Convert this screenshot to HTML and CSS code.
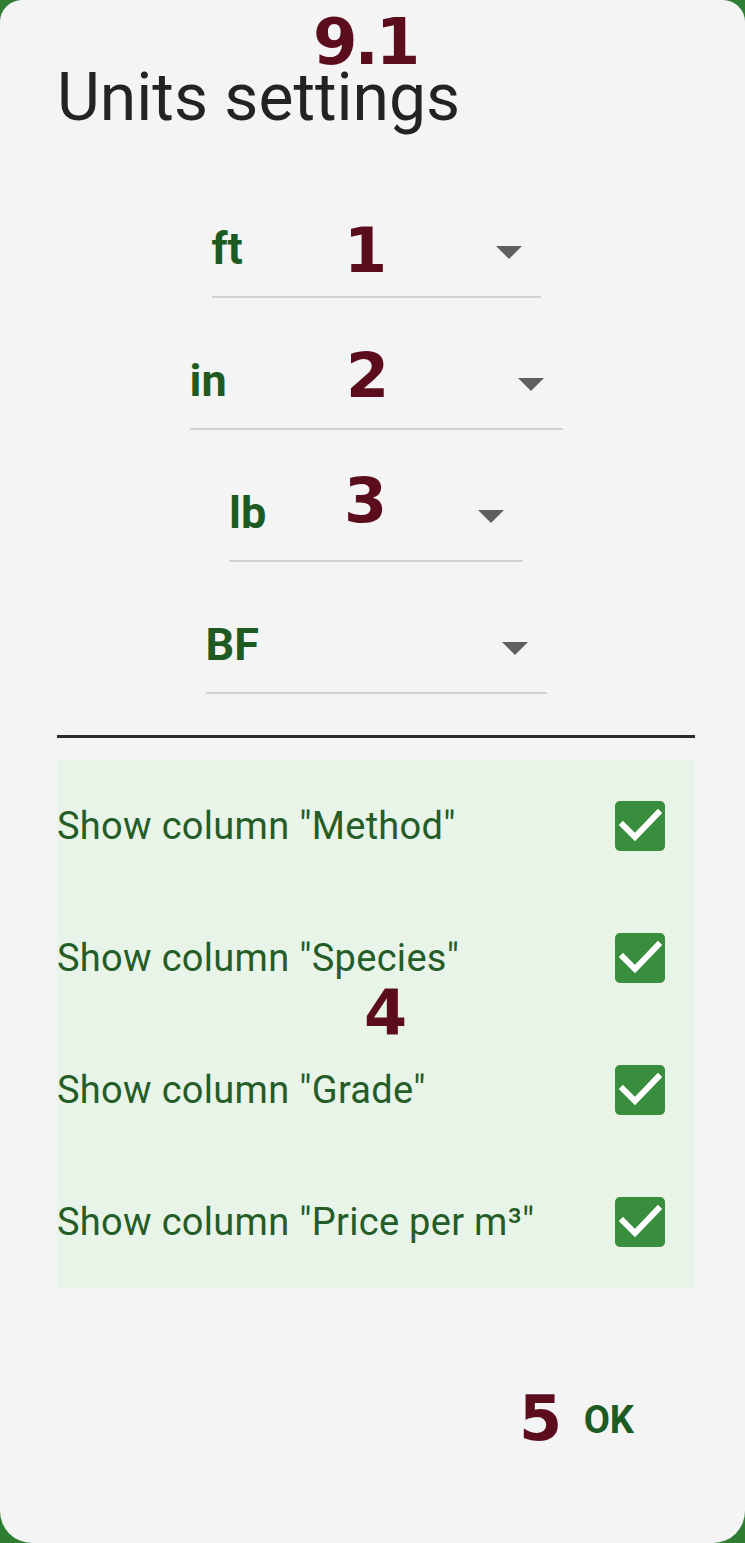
FILE: index.html
```html
<!DOCTYPE html>
<html lang="en">
<head>
<meta charset="utf-8">
<title>Units settings</title>
<link rel="stylesheet" href="styles.css">
</head>
<body>
<div class="card">
  <span class="anno anno-91">9.1</span>
  <h1 class="title">Units settings</h1>

  <div class="selects">
    <div class="select w-ft"><span class="label">ft</span><span class="arrow"></span></div>
    <div class="select w-in"><span class="label">in</span><span class="arrow"></span></div>
    <div class="select w-lb"><span class="label">lb</span><span class="arrow"></span></div>
    <div class="select w-bf"><span class="label">BF</span><span class="arrow"></span></div>
  </div>
  <span class="anno anno-1">1</span>
  <span class="anno anno-2">2</span>
  <span class="anno anno-3">3</span>

  <div class="divider"></div>

  <div class="panel">
    <div class="row"><span class="row-text">Show column "Method"</span><span class="cb"><svg viewBox="0 0 50 50" width="50" height="50"><path d="M8 24 L20 36 L43 12" fill="none" stroke="#fff" stroke-width="6" stroke-linecap="square"/></svg></span></div>
    <div class="row"><span class="row-text">Show column "Species"</span><span class="cb"><svg viewBox="0 0 50 50" width="50" height="50"><path d="M8 24 L20 36 L43 12" fill="none" stroke="#fff" stroke-width="6" stroke-linecap="square"/></svg></span></div>
    <div class="row"><span class="row-text">Show column "Grade"</span><span class="cb"><svg viewBox="0 0 50 50" width="50" height="50"><path d="M8 24 L20 36 L43 12" fill="none" stroke="#fff" stroke-width="6" stroke-linecap="square"/></svg></span></div>
    <div class="row"><span class="row-text">Show column "Price per m³"</span><span class="cb"><svg viewBox="0 0 50 50" width="50" height="50"><path d="M8 24 L20 36 L43 12" fill="none" stroke="#fff" stroke-width="6" stroke-linecap="square"/></svg></span></div>
  </div>
  <span class="anno anno-4">4</span>

  <div class="footer">
    <span class="ok">OK</span>
  </div>
  <span class="anno anno-5">5</span>
</div>
</body>
</html>
```
FILE: styles.css
```css
html, body {
  margin: 0;
  padding: 0;
  background: #2e7d32;
}

.card {
  position: relative;
  box-sizing: border-box;
  width: 745px;
  height: 1543px;
  background: #f4f4f4;
  border-radius: 22px 22px 32px 32px;
  padding: 0 50px 0 57px;
  display: flex;
  flex-direction: column;
  font-family: Roboto, "Liberation Sans", sans-serif;
}

.title {
  margin: 70px 0 0 0;
  font-family: Roboto, "Liberation Sans", sans-serif;
  font-weight: 400;
  font-size: 66px;
  line-height: 56px;
  color: #232323;
  padding-left: 0;
}

.selects {
  margin-top: 98px;
  display: flex;
  flex-direction: column;
  gap: 58px;
  align-items: center;
}

.select {
  box-sizing: border-box;
  height: 74px;
  padding: 0 19px 22px 0;
  border-bottom: 2px solid #d2d2d2;
  display: flex;
  align-items: center;
  justify-content: space-between;
}

.w-ft { width: 329px; }
.w-in { width: 373px; }
.w-lb { width: 294px; }
.w-bf { width: 341px; }

.label {
  font-family: Roboto, "Liberation Sans", sans-serif;
  font-weight: 700;
  font-size: 45px;
  line-height: 50px;
  color: #1d5b22;
}

.arrow {
  width: 0;
  height: 0;
  border-left: 13px solid transparent;
  border-right: 13px solid transparent;
  border-top: 13px solid #5f5f5f;
  margin-top: 7px;
}

.divider {
  margin-top: 41px;
  height: 3px;
  background: #2b2b2b;
}

.panel {
  margin-top: 22px;
  background: #e9f4e9;
  display: flex;
  flex-direction: column;
  padding-right: 30px;
}

.row {
  height: 132px;
  display: flex;
  align-items: center;
  justify-content: space-between;
}

.row-text {
  font-family: Roboto, "Liberation Sans", sans-serif;
  font-size: 38px;
  letter-spacing: 0.3px;
  color: #245d28;
}

.cb {
  width: 50px;
  height: 50px;
  border-radius: 5px;
  background: #388e3c;
  display: block;
}

.cb svg {
  display: block;
}

.footer {
  margin-top: 110px;
  display: flex;
  justify-content: flex-end;
  padding-right: 61px;
}

.ok {
  font-family: Roboto, "Liberation Sans", sans-serif;
  font-weight: 700;
  font-size: 38px;
  line-height: 44px;
  color: #1d5b22;
}

.anno {
  position: absolute;
  font-family: "DejaVu Sans", sans-serif;
  font-weight: 700;
  font-size: 62px;
  line-height: 1;
  color: #5b0d1d;
}

.anno-91 { left: 313px; top: 17px; font-size: 64px; line-height: 0.8; letter-spacing: -3px; }
.anno-1 { left: 344px; top: 220px; }
.anno-2 { left: 346px; top: 345px; }
.anno-3 { left: 344px; top: 470px; }
.anno-4 { left: 364px; top: 982px; }
.anno-5 { left: 519px; top: 1388px; }
```
